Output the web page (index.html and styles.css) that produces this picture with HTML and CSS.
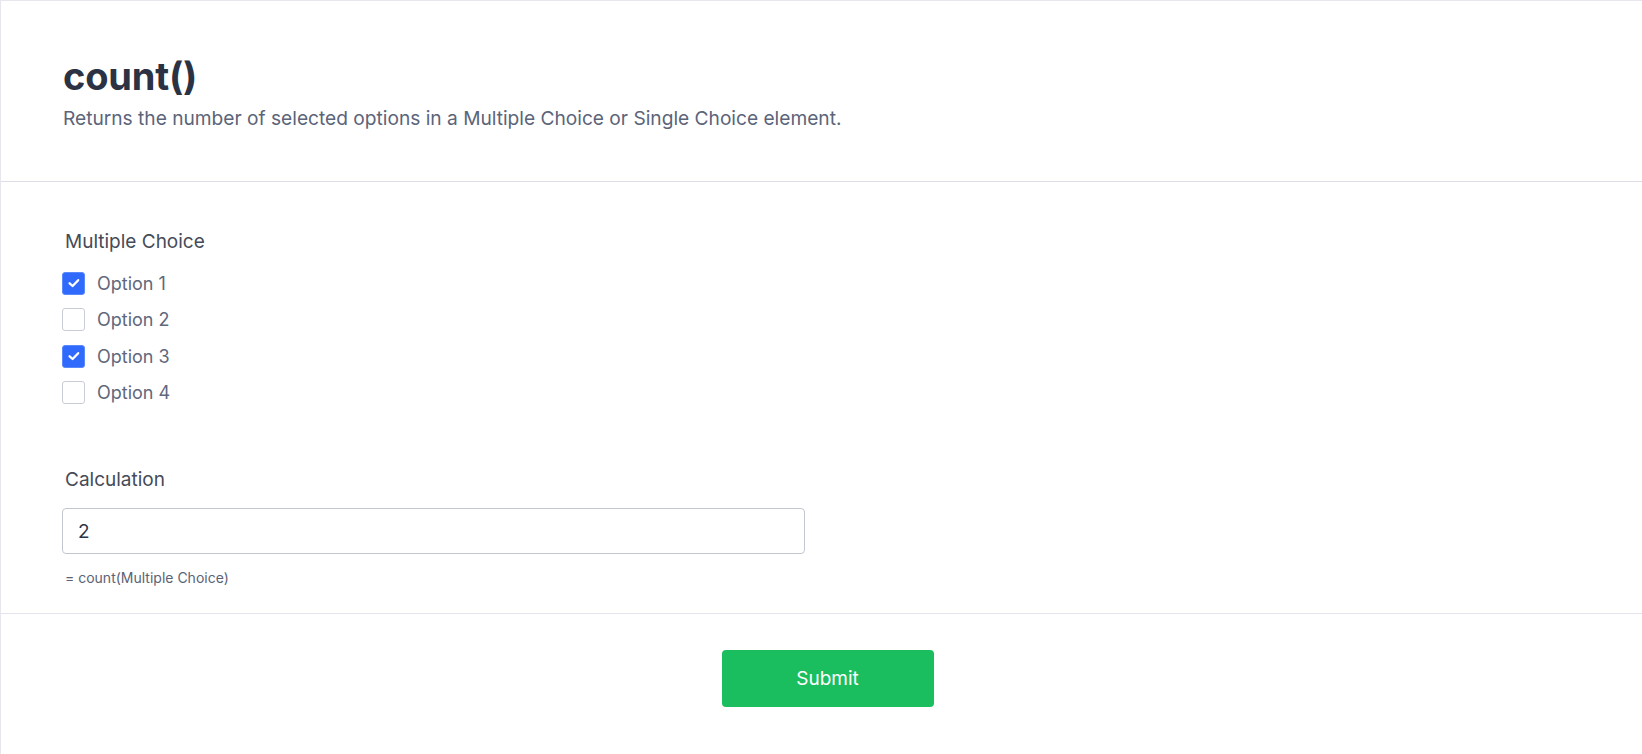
FILE: index.html
```html
<!DOCTYPE html>
<html lang="en">
<head>
<meta charset="utf-8">
<title>count()</title>
<link rel="stylesheet" href="styles.css">
</head>
<body>
<div class="card">
  <header class="intro">
    <h1 class="title">count()</h1>
    <p class="subtitle">Returns the number of selected options in a Multiple Choice or Single Choice element.</p>
  </header>
  <main class="form-body">
    <div class="field">
      <div class="label">Multiple Choice</div>
      <div class="choices">
        <label class="choice">
          <span class="box checked"><svg viewBox="0 0 14 14" width="14" height="14"><polyline points="2.6,7.3 5.6,10 11.2,4.2" fill="none" stroke="#fff" stroke-width="2.3" stroke-linecap="round" stroke-linejoin="round"/></svg></span>
          <span class="choice-text">Option 1</span>
        </label>
        <label class="choice">
          <span class="box"></span>
          <span class="choice-text">Option 2</span>
        </label>
        <label class="choice">
          <span class="box checked"><svg viewBox="0 0 14 14" width="14" height="14"><polyline points="2.6,7.3 5.6,10 11.2,4.2" fill="none" stroke="#fff" stroke-width="2.3" stroke-linecap="round" stroke-linejoin="round"/></svg></span>
          <span class="choice-text">Option 3</span>
        </label>
        <label class="choice">
          <span class="box"></span>
          <span class="choice-text">Option 4</span>
        </label>
      </div>
    </div>
    <div class="field calc">
      <div class="label">Calculation</div>
      <div class="input">2</div>
      <div class="formula">= count(Multiple Choice)</div>
    </div>
  </main>
  <footer class="actions">
    <button class="submit" type="button">Submit</button>
  </footer>
</div>
</body>
</html>
```
FILE: styles.css
```css
* { box-sizing: border-box; }
html, body { margin: 0; padding: 0; background: #ffffff; }
body {
  font-family: Inter, "Noto Sans", "Liberation Sans", sans-serif;
  color: #2d3446;
  height: 754px;
  overflow: hidden;
}
.card {
  border-top: 1px solid #e6e7ec;
  border-left: 1px solid #e6e7ec;
  min-height: 754px;
}
.intro {
  padding: 52px 62px 49px;
  border-bottom: 1px solid #dddee5;
}
.title {
  margin: 0;
  font-size: 38px;
  line-height: 46px;
  font-weight: 700;
  color: #2b3244;
  letter-spacing: -0.2px;
}
.subtitle {
  margin: 5px 0 0;
  font-size: 19.15px;
  line-height: 28px;
  color: #5b6479;
}
.form-body {
  padding: 46px 61px 25px;
  border-bottom: 1px solid #e4e5ec;
}
.label {
  font-size: 19px;
  line-height: 28px;
  font-weight: 400;
  color: #454b58;
  padding-left: 3px;
}
.choices {
  display: flex;
  flex-direction: column;
  gap: 13.67px;
  margin-top: 15.5px;
}
.choice {
  display: flex;
  align-items: center;
  gap: 12px;
  height: 23px;
}
.box {
  width: 23px;
  height: 23px;
  border: 1px solid #c9ced6;
  border-radius: 3px;
  background: #fff;
  display: flex;
  align-items: center;
  justify-content: center;
}
.box.checked {
  background: #306afc;
  border-color: #5a88fd;
}
.choice-text {
  font-size: 18px;
  line-height: 23px;
  color: #5f687c;
}
.calc { margin-top: 61.5px; }
.input {
  margin-top: 14.5px;
  width: 743px;
  height: 46px;
  border: 1px solid #c2c6cf;
  border-radius: 4px;
  padding: 0 15px;
  display: flex;
  align-items: center;
  font-size: 19px;
  color: #2d3446;
}
.formula {
  margin-top: 14px;
  padding-left: 3px;
  font-size: 14px;
  line-height: 20px;
  color: #5a6376;
}
.actions {
  display: flex;
  justify-content: center;
  padding: 36px 0 0 12px;
}
.submit {
  width: 212px;
  height: 57px;
  border: none;
  border-radius: 4px;
  background: #1bbe5e;
  color: #ffffff;
  font-family: inherit;
  font-size: 19px;
}
```
